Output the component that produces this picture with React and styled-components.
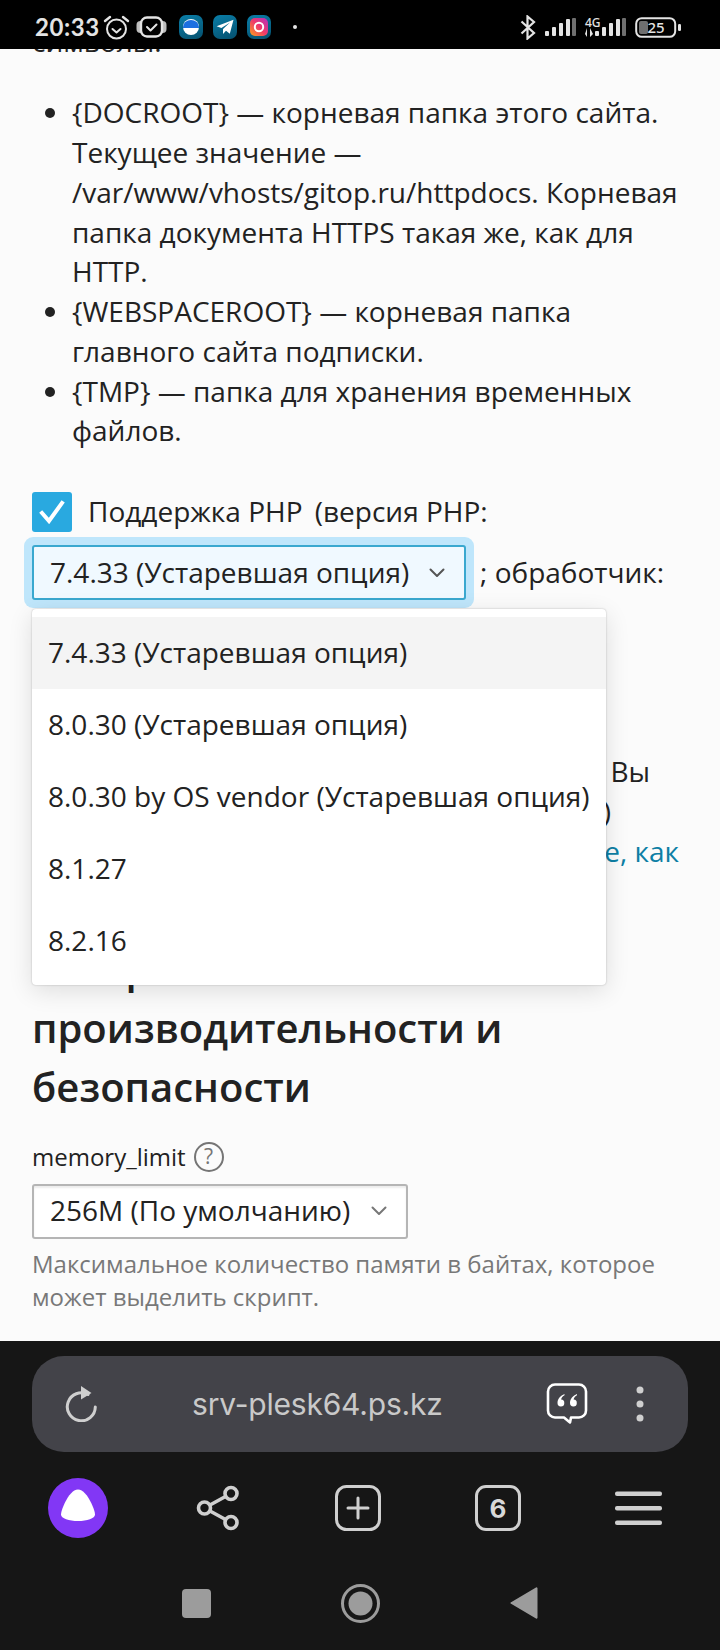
import React from "react";
import styled, { createGlobalStyle } from "styled-components";

const GlobalStyle = createGlobalStyle`
  html, body {
    margin: 0;
    padding: 0;
    background: #fbfbfb;
  }
  * {
    box-sizing: border-box;
  }
`;

const Page = styled.div`
  width: 720px;
  height: 1650px;
  display: flex;
  flex-direction: column;
  overflow: hidden;
  font-family: "Open Sans", "Noto Sans", sans-serif;
`;

const StatusBar = styled.div`
  height: 49px;
  flex: none;
  background: #000;
  color: #e4e4e4;
  display: flex;
  align-items: center;
  justify-content: space-between;
  padding: 5px 39px 0 35px;
  position: relative;
  z-index: 2;
`;

const StatusGroup = styled.div`
  display: flex;
  align-items: center;
  gap: ${({ $gap }) => $gap || 8}px;
`;

const Clock = styled.span`
  font-family: "Lato", sans-serif;
  font-size: 24px;
  font-weight: 700;
  letter-spacing: 0.6px;
  line-height: 1;
`;

const AlarmSlot = styled.span`
  display: flex;
  margin: 0 2px 0 0;
`;

const WatchSlot = styled.span`
  display: flex;
  margin-right: 8px;
`;

const AppIcon = styled.span`
  width: 24px;
  height: 24px;
  border-radius: 7px;
  background: linear-gradient(160deg, #0a7ea8, #05506e);
  display: flex;
  align-items: center;
  justify-content: center;
  margin-right: 7px;
`;

const NotifyDot = styled.span`
  width: 4px;
  height: 4px;
  border-radius: 50%;
  background: #e4e4e4;
  margin-left: 12px;
`;

const NetType = styled.span`
  display: flex;
  flex-direction: column;
  align-items: flex-start;
  width: 18px;
  font-family: "Noto Sans", sans-serif;
  font-size: 12px;
  font-weight: 500;
  line-height: 11px;
  margin: -1px -17px 0 0;
  position: relative;
  z-index: 1;
`;

const Content = styled.main`
  flex: 1;
  min-height: 0;
  position: relative;
  overflow: hidden;
  background: #fbfbfb;
  color: #222;
  padding: 0 32px;
  font-size: 28px;
  line-height: 39.75px;
`;

const ClippedLine = styled.p`
  margin: -27px 0 31.5px;
`;

const BulletList = styled.ul`
  margin: 0 0 41px;
  padding: 0 0 0 40px;
`;

const SupportRow = styled.div`
  display: flex;
  align-items: center;
  gap: 16px;
  height: 40px;
  margin-bottom: 13px;
`;

const VersionNote = styled.span`
  margin-left: 5px;
`;

const CheckBox = styled.span`
  width: 40px;
  height: 40px;
  flex: none;
  border-radius: 3px;
  background: #29a9e0;
  display: flex;
  align-items: center;
  justify-content: center;
`;

const SelectRow = styled.div`
  display: flex;
  align-items: center;
  gap: 14px;
  height: 55px;
`;

const SelectBox = styled.div`
  height: 55px;
  width: ${({ $width }) => $width}px;
  display: flex;
  align-items: center;
  justify-content: space-between;
  padding: 0 19px 0 16px;
  border-radius: 3px;
  white-space: nowrap;
  border: 2px solid ${({ $focused }) => ($focused ? "#3aa8cf" : "#b5b5b5")};
  background: ${({ $focused }) => ($focused ? "#f0f9ff" : "#fff")};
  box-shadow: ${({ $focused }) =>
    $focused ? "0 0 0 8px #bfe6fb" : "inset 0 2px 2px rgba(0, 0, 0, 0.08)"};
`;

const Dropdown = styled.div`
  position: absolute;
  z-index: 1;
  left: 32px;
  top: 560px;
  width: 574px;
  padding: 8px 0;
  background: #fff;
  border-radius: 4px;
  box-shadow: 0 0 2px rgba(0, 0, 0, 0.25), 0 6px 24px rgba(0, 0, 0, 0.12);
`;

const DropdownItem = styled.div`
  height: 72px;
  padding: 0 16px;
  display: flex;
  align-items: center;
  white-space: nowrap;
  background: ${({ $active }) => ($active ? "#f4f4f4" : "transparent")};
`;

const CoveredBlock = styled.div`
  margin-top: 47px;
  margin-bottom: 67px;
`;

const CoveredLine = styled.div`
  text-align: right;
  padding-right: ${({ $right }) => $right}px;
  white-space: nowrap;
  margin-top: ${({ $top }) => $top || 0}px;
`;

const HelpLink = styled.span`
  color: #0d7fa5;
`;

const Heading = styled.h2`
  margin: 0 0 24px;
  font-size: 40px;
  line-height: 59.5px;
  font-weight: 600;
  color: #222;
`;

const FieldLabel = styled.div`
  display: flex;
  align-items: center;
  gap: 8px;
  font-size: 24px;
  line-height: 32px;
  margin-bottom: 11px;
`;

const HelpCircle = styled.span`
  width: 30px;
  height: 30px;
  border-radius: 50%;
  border: 2px solid #757575;
  color: #757575;
  font-size: 21px;
  line-height: 1;
  display: flex;
  align-items: center;
  justify-content: center;
`;

const Hint = styled.p`
  margin: 8px 0 0;
  font-size: 24px;
  line-height: 33px;
  color: #787878;
`;

const BottomPanel = styled.div`
  height: 309px;
  flex: none;
  background: #161616;
  padding: 15px 0 0;
  display: flex;
  flex-direction: column;
`;

const AddressBar = styled.div`
  height: 96px;
  margin: 0 32px;
  padding: 0 44px 0 33px;
  border-radius: 32px;
  background: #434349;
  display: flex;
  align-items: center;
`;

const Url = styled.span`
  flex: 1;
  font-family: "Inter", sans-serif;
  font-size: 30px;
  letter-spacing: -0.2px;
  color: #c9c9c9;
  padding-left: 95px;
`;

const AddressActions = styled.div`
  display: flex;
  align-items: center;
  gap: 48px;
`;

const Toolbar = styled.nav`
  display: grid;
  grid-template-columns: repeat(5, 140px);
  margin: 24px 8px 0;
  height: 64px;
  align-items: center;
  justify-items: center;
`;

const TabCount = styled.span`
  width: 46px;
  height: 46px;
  border: 3px solid #cfcfcf;
  border-radius: 11px;
  color: #d8d8d8;
  font-family: "Inter", sans-serif;
  font-size: 26px;
  font-weight: 700;
  display: flex;
  align-items: center;
  justify-content: center;
`;

const SystemNav = styled.div`
  display: flex;
  justify-content: center;
  align-items: center;
  margin-top: 43px;
  height: 40px;
  gap: 130px;
`;

const PhoneIcons = {
  Alarm: () => (
    <svg width="27" height="27" viewBox="0 0 27 27" fill="none" stroke="#e4e4e4" strokeWidth="2" strokeLinecap="round" strokeLinejoin="round">
      <circle cx="13.5" cy="15" r="9.5" />
      <path d="M9.5 15l4 3.5 4-3.5" />
      <path d="M2 7l5-4M25 7l-5-4" strokeWidth="2.4" />
    </svg>
  ),
  Watch: () => (
    <svg width="33" height="22" viewBox="0 0 33 22" fill="none" stroke="#e4e4e4" strokeLinecap="round" strokeLinejoin="round">
      <rect x="1.5" y="5" width="30" height="12" rx="4" fill="#bdbdbd" stroke="none" />
      <rect x="6" y="1.5" width="21" height="19" rx="6" fill="#000" strokeWidth="2.4" />
      <path d="M12 11l3.5 3.5 6-6" strokeWidth="2" />
    </svg>
  ),
  Message: () => (
    <svg width="18" height="18" viewBox="0 0 18 18">
      <circle cx="9" cy="9" r="8" fill="#fff" />
      <path d="M1 9a8 7 0 0 1 16 0v1H1z" fill="#1b6fe0" />
    </svg>
  ),
  Telegram: () => (
    <svg width="18" height="16" viewBox="0 0 18 16">
      <path d="M17.5.8L.6 7.3l4.8 1.8L14 3.4 7 10v5l3-3.2 3.8 3z" fill="#fff" />
    </svg>
  ),
  Instagram: () => (
    <svg width="18" height="18" viewBox="0 0 18 18">
      <defs>
        <linearGradient id="ig" x1="0" y1="1" x2="1" y2="0">
          <stop offset="0" stopColor="#f9a11b" />
          <stop offset="0.5" stopColor="#ef3a6a" />
          <stop offset="1" stopColor="#b52fc1" />
        </linearGradient>
      </defs>
      <rect width="18" height="18" rx="5" fill="url(#ig)" />
      <circle cx="9" cy="9" r="4.2" fill="none" stroke="#fff" strokeWidth="2" />
    </svg>
  ),
  Bluetooth: () => (
    <svg width="16" height="25" viewBox="0 0 16 25" fill="none" stroke="#e4e4e4" strokeWidth="2.2">
      <path d="M1.5 6.5L14 18l-6.5 5.5v-22L14 7 1.5 18.5" />
    </svg>
  ),
  Signal: () => (
    <svg width="31" height="20" viewBox="0 0 31 20" fill="#e4e4e4">
      <rect x="0" y="14" width="4" height="5" rx="1" />
      <rect x="7" y="10" width="4" height="9" rx="1" />
      <rect x="14" y="6" width="4" height="13" rx="1" />
      <rect x="21" y="2" width="4" height="17" rx="1" />
      <rect x="27" y="1" width="4" height="18" rx="1" fill="#6f6f6f" />
    </svg>
  ),
  Arrows: () => (
    <svg width="9" height="9" viewBox="0 0 9 9" fill="#e4e4e4">
      <path d="M2 0v9L0 6zM5 0v9l3-3z" />
    </svg>
  ),
  Battery: () => (
    <svg width="46" height="21" viewBox="0 0 46 21" fill="none">
      <rect x="1.2" y="1.2" width="39" height="18.6" rx="5.5" stroke="#e4e4e4" strokeWidth="2" />
      <rect x="4" y="4" width="9" height="13" rx="2" fill="#6f6f6f" />
      <rect x="43" y="7" width="3" height="7" rx="1.2" fill="#e4e4e4" />
      <text x="21" y="16" textAnchor="middle" fontFamily="Noto Sans, sans-serif" fontSize="15" fontWeight="500" fill="#e4e4e4">25</text>
    </svg>
  ),
};

const Chevron = ({ color = "#555" }) => (
  <svg width="16" height="10" viewBox="0 0 16 10" fill="none" stroke={color} strokeWidth="2" strokeLinecap="round" strokeLinejoin="round">
    <path d="M1.5 1.5L8 8l6.5-6.5" />
  </svg>
);

const CheckMark = () => (
  <svg width="26" height="24" viewBox="0 0 26 24" fill="none" stroke="#fff" strokeWidth="4" strokeLinecap="square">
    <path d="M3 13l7 8L23 3" />
  </svg>
);

const ReloadIcon = () => (
  <svg width="32" height="36" viewBox="0 0 32 36" fill="none">
    <path d="M23 8.5A14 14 0 1 0 30.3 21" stroke="#cfcfcf" strokeWidth="3" strokeLinecap="round" />
    <path d="M16 0l10.5 7L16 13.5z" fill="#cfcfcf" />
  </svg>
);

const QuoteBubble = () => (
  <svg width="42" height="42" viewBox="0 0 42 42" fill="none">
    <path d="M9 1.5h24a7 7 0 0 1 7 7v19a7 7 0 0 1-7 7h-8l-1 5-6-5H9a7 7 0 0 1-7-7v-19a7 7 0 0 1 7-7z" stroke="#fff" strokeWidth="2.6" strokeLinejoin="round" />
    <path d="M18.5 11c-4 1.5-7 5-7 9a3.4 3.4 0 1 0 3.6-3.4c.3-1.8 1.7-3.4 3.4-4.3zM31 11c-4 1.5-7 5-7 9a3.4 3.4 0 1 0 3.6-3.4c.3-1.8 1.7-3.4 3.4-4.3z" fill="#fff" />
  </svg>
);

const MoreDots = () => (
  <svg width="8" height="36" viewBox="0 0 8 36" fill="#cfcfcf">
    <circle cx="4" cy="4" r="3.5" />
    <circle cx="4" cy="18" r="3.5" />
    <circle cx="4" cy="32" r="3.5" />
  </svg>
);

const AliceIcon = () => (
  <svg width="60" height="60" viewBox="0 0 60 60">
    <circle cx="30" cy="30" r="30" fill="#8237f5" />
    <path d="M30 11.5c5 0 9.5 6 13 13 2 4 4 9 4 12 0 4-8 6.5-17 6.5s-17-2.5-17-6.5c0-3 2-8 4-12 3.5-7 8-13 13-13z" fill="#fff" />
  </svg>
);

const ShareIcon = () => (
  <svg width="44" height="46" viewBox="0 0 44 46" fill="none" stroke="#cfcfcf" strokeWidth="3.6">
    <circle cx="8.5" cy="23" r="6" />
    <circle cx="35" cy="8.5" r="6" />
    <circle cx="35" cy="37.5" r="6" />
    <path d="M14 20L29.5 11.5M14 26l15.5 8.5" />
  </svg>
);

const NewTabIcon = () => (
  <svg width="46" height="46" viewBox="0 0 46 46" fill="none" stroke="#cfcfcf" strokeWidth="3">
    <rect x="1.5" y="1.5" width="43" height="43" rx="10" />
    <path d="M13 23h20M23 13v20" strokeLinecap="round" />
  </svg>
);

const MenuIcon = () => (
  <svg width="47" height="34" viewBox="0 0 47 34" fill="#cfcfcf">
    <rect width="47" height="4.5" rx="2" y="0.5" />
    <rect width="47" height="4.5" rx="2" y="15" />
    <rect width="47" height="4.5" rx="2" y="29.5" />
  </svg>
);

const NavSquare = () => (
  <svg width="29" height="29" viewBox="0 0 29 29">
    <rect width="29" height="29" rx="4" fill="#9c9c9c" />
  </svg>
);

const NavHome = () => (
  <svg width="39" height="39" viewBox="0 0 39 39" fill="none">
    <circle cx="19.5" cy="19.5" r="18" stroke="#9c9c9c" strokeWidth="3" />
    <circle cx="19.5" cy="19.5" r="12" fill="#9c9c9c" />
  </svg>
);

const NavBack = () => (
  <svg width="28" height="34" viewBox="0 0 28 34">
    <path d="M26 1.5L1.5 16a1 1 0 0 0 0 2L26 32.5a1 1 0 0 0 1.5-1V2.5a1 1 0 0 0-1.5-1z" fill="#9c9c9c" />
  </svg>
);

const bullets = [
  "{DOCROOT} — корневая папка этого сайта. Текущее значение — /var/www/vhosts/gitop.ru/httpdocs. Корневая папка документа HTTPS такая же, как для HTTP.",
  "{WEBSPACEROOT} — корневая папка главного сайта подписки.",
  "{TMP} — папка для хранения временных файлов.",
];

const phpVersions = [
  "7.4.33 (Устаревшая опция)",
  "8.0.30 (Устаревшая опция)",
  "8.0.30 by OS vendor (Устаревшая опция)",
  "8.1.27",
  "8.2.16",
];

export default function App() {
  return (
    <Page>
      <GlobalStyle />
      <StatusBar>
        <StatusGroup $gap={3}>
          <Clock>20:33</Clock>
          <AlarmSlot>
            <PhoneIcons.Alarm />
          </AlarmSlot>
          <WatchSlot>
            <PhoneIcons.Watch />
          </WatchSlot>
          <AppIcon>
            <PhoneIcons.Message />
          </AppIcon>
          <AppIcon>
            <PhoneIcons.Telegram />
          </AppIcon>
          <AppIcon>
            <PhoneIcons.Instagram />
          </AppIcon>
          <NotifyDot />
        </StatusGroup>
        <StatusGroup $gap={9}>
          <PhoneIcons.Bluetooth />
          <PhoneIcons.Signal />
          <NetType>
            4G
            <PhoneIcons.Arrows />
          </NetType>
          <PhoneIcons.Signal />
          <PhoneIcons.Battery />
        </StatusGroup>
      </StatusBar>

      <Content>
        <ClippedLine>символы:</ClippedLine>
        <BulletList>
          {bullets.map((text) => (
            <li key={text}>{text}</li>
          ))}
        </BulletList>

        <SupportRow>
          <CheckBox>
            <CheckMark />
          </CheckBox>
          <span>
            Поддержка PHP <VersionNote>(версия PHP:</VersionNote>
          </span>
        </SupportRow>
        <SelectRow>
          <SelectBox $focused $width={434}>
            <span>{phpVersions[0]}</span>
            <Chevron />
          </SelectBox>
          <span>; обработчик:</span>
        </SelectRow>

        <Dropdown>
          {phpVersions.map((version, index) => (
            <DropdownItem key={version} $active={index === 0}>
              {version}
            </DropdownItem>
          ))}
        </Dropdown>

        <CoveredBlock>
          <SelectBox $width={330}>
            <span>FPM-приложение</span>
            <Chevron />
          </SelectBox>
          <CoveredLine $right={38} $top={50}>
            Дополнительные настройки PHP. Вы
          </CoveredLine>
          <CoveredLine $right={77}>можете изменить значения (по желанию)</CoveredLine>
          <CoveredLine $right={9}>
            <HelpLink>Подробнее о том, что это такое, как</HelpLink>
          </CoveredLine>
        </CoveredBlock>

        <Heading>Настройки производительности и безопасности</Heading>

        <FieldLabel>
          memory_limit
          <HelpCircle>?</HelpCircle>
        </FieldLabel>
        <SelectBox $width={376}>
          <span>256M (По умолчанию)</span>
          <Chevron color="#777" />
        </SelectBox>
        <Hint>Максимальное количество памяти в байтах, которое может выделить скрипт.</Hint>
      </Content>

      <BottomPanel>
        <AddressBar>
          <ReloadIcon />
          <Url>srv-plesk64.ps.kz</Url>
          <AddressActions>
            <QuoteBubble />
            <MoreDots />
          </AddressActions>
        </AddressBar>
        <Toolbar>
          <AliceIcon />
          <ShareIcon />
          <NewTabIcon />
          <TabCount>6</TabCount>
          <MenuIcon />
        </Toolbar>
        <SystemNav>
          <NavSquare />
          <NavHome />
          <NavBack />
        </SystemNav>
      </BottomPanel>
    </Page>
  );
}
